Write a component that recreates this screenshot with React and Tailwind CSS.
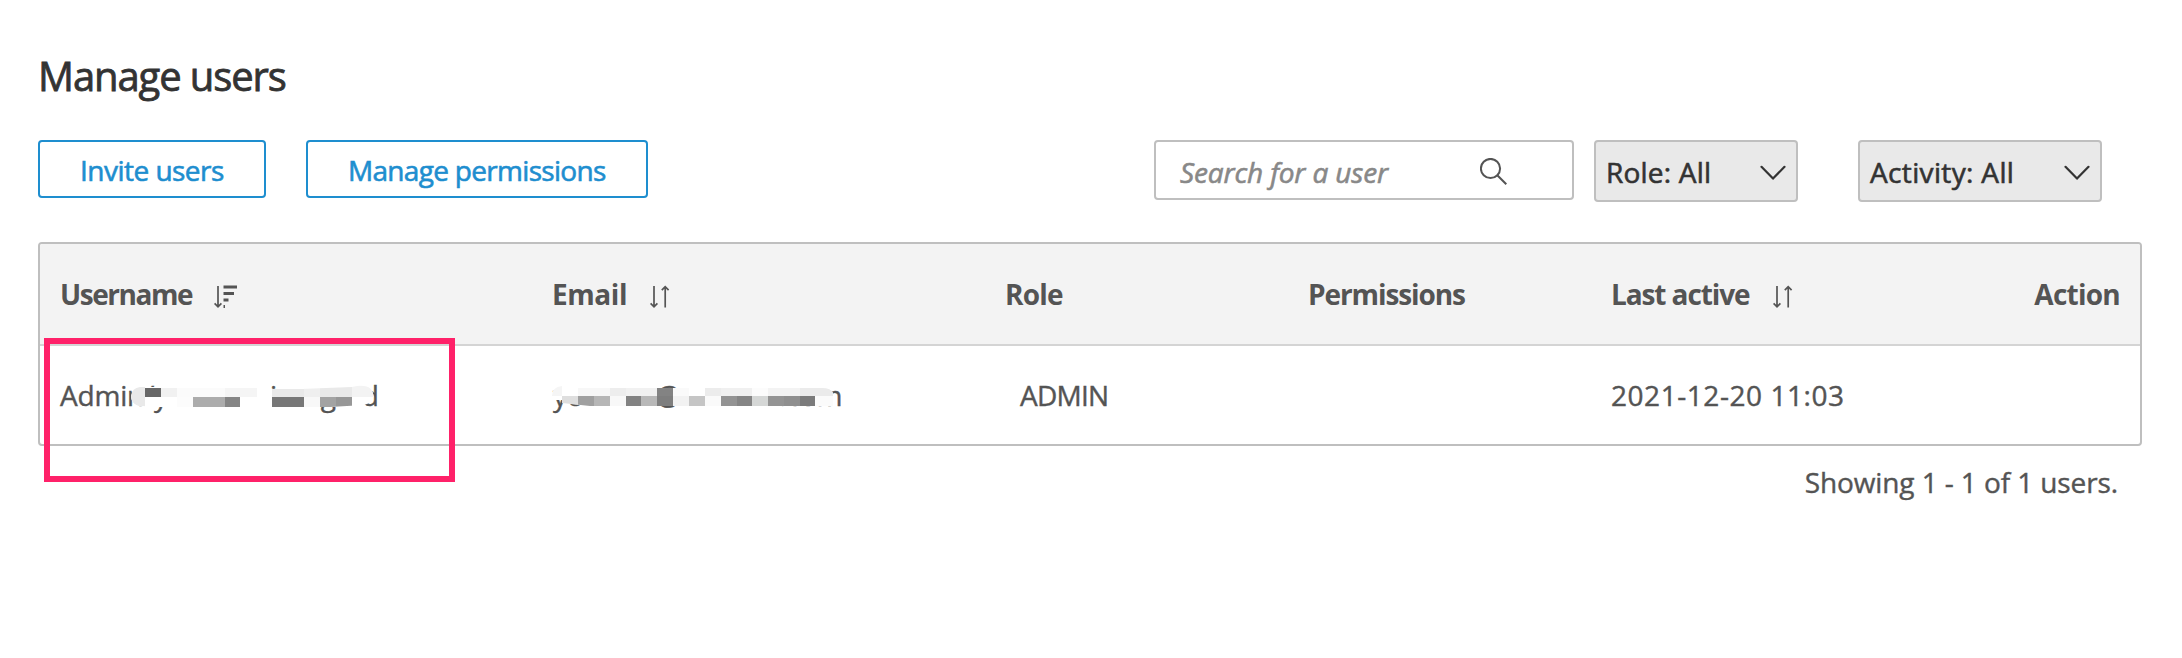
import React from 'react';

const usernameMask = [
  [131, 386, 14, 20, '#e9e9e9'],
  [145, 388, 16, 9, '#676767'], [161, 388, 16, 9, '#f1f1f1'], [177, 388, 48, 9, '#fbfbfb'],
  [225, 388, 32, 9, '#f5f5f5'], [272, 389, 32, 8, '#e9e9e9'], [304, 388, 16, 9, '#efefef'],
  [320, 386, 32, 11, '#e9e9e9'], [352, 385, 23, 12, '#f3f3f3'], [177, 397, 16, 10, '#fcfcfc'],
  [193, 397, 32, 10, '#acacac'], [225, 397, 15, 10, '#858585'], [272, 397, 32, 10, '#777777'],
  [304, 397, 16, 10, '#f8f8f8'], [320, 397, 16, 10, '#a3a3a3'], [336, 397, 16, 10, '#979797'],
];

const emailMask = [
  [552, 386, 10, 10, '#f5f5f5'], [578, 388, 32, 8, '#f7f7f7'], [610, 388, 16, 8, '#ededed'],
  [626, 388, 31, 8, '#f1f1f1'], [657, 388, 16, 8, '#838383'], [673, 388, 16, 8, '#fafafa'],
  [705, 388, 16, 8, '#ececec'], [721, 388, 31, 8, '#f0f0f0'], [752, 388, 16, 8, '#fcfcfc'],
  [768, 388, 32, 8, '#f3f3f3'], [800, 388, 33, 8, '#ebebeb'], [562, 396, 16, 10, '#dedede'],
  [578, 396, 16, 10, '#a0a0a0'], [594, 396, 16, 10, '#b6b6b6'], [610, 396, 16, 10, '#f8f8f8'],
  [626, 396, 15, 10, '#828282'], [641, 396, 16, 10, '#b8b8b8'], [657, 396, 16, 10, '#7e7e7e'],
  [673, 396, 16, 10, '#f2f2f2'], [689, 396, 16, 10, '#c5c5c5'], [705, 396, 16, 10, '#fafafa'],
  [721, 396, 16, 10, '#939393'], [737, 396, 15, 10, '#858585'], [752, 396, 16, 10, '#d5d7d6'],
  [768, 396, 16, 10, '#949494'], [784, 396, 16, 10, '#8f8f8f'], [800, 396, 15, 10, '#7b7b7b'],
  [815, 396, 18, 10, '#fbfbfb'],
];

function Mosaic({ cells, id, outline, x, width, className }) {
  return (
    <svg className={className} width={width} height="24" viewBox={`${x} 384 ${width} 24`}>
      <clipPath id={id}><path d={outline} /></clipPath>
      <g clipPath={`url(#${id})`}>
        <rect x={x} y="384" width={width} height="24" fill="#fff" />
        {cells.map(([cx, cy, w, h, fill]) => (
          <rect key={`${cx}-${cy}`} x={cx} y={cy} width={w} height={h} fill={fill} />
        ))}
      </g>
    </svg>
  );
}

function Chevron() {
  return (
    <svg className="mt-[3px]" width="26" height="16" viewBox="0 0 26 16" fill="none" stroke="#333" strokeWidth="2.2" strokeLinecap="round" strokeLinejoin="round">
      <path d="M1.5 1.8 13 13.6 24.5 1.8" />
    </svg>
  );
}

function SortBoth() {
  return (
    <svg className="mt-[6px]" width="20" height="24" viewBox="0 0 20 24" fill="none" stroke="#545454" strokeWidth="1.7">
      <path d="M4 1v20.5M.6 18.4 4 21.8l3.4-3.4M15.2 22.5V2M11.8 5.1l3.4-3.4 3.4 3.4" />
    </svg>
  );
}

function SortDesc() {
  return (
    <svg className="mt-[6px]" width="24" height="24" viewBox="0 0 24 24" fill="#545454">
      <path d="M4 1v20.5M.6 18.4 4 21.8l3.4-3.4" fill="none" stroke="#545454" strokeWidth="1.7" />
      <path d="M9.500 .5h13.500v3H9.500zM9.500 7h10.500v3H9.500zM9.500 13.500h5v3h-5zM9.500 20h1.500v3H9.500z" />
    </svg>
  );
}

export default function App() {
  return (
    <main className="relative h-[658px] w-[2182px] overflow-hidden bg-white pl-[38px] pt-[52px] font-['Open_Sans',sans-serif] text-[28px] leading-[40px] text-[#545454]">
      <h1 className="h-[88px] text-[40px] leading-[48px] tracking-[-1.1px] text-[#333] [-webkit-text-stroke:0.8px_#333]">Manage users</h1>

      <div className="flex h-[62px] items-start whitespace-nowrap">
        <button className="flex h-[58px] w-[228px] items-center rounded-[4px] border-2 border-[#1e8ecf] pl-[40px] pt-px tracking-[-0.52px] text-[#1e8ecf] [-webkit-text-stroke:0.6px_#1e8ecf]">Invite users</button>
        <button className="ml-[40px] flex h-[58px] w-[342px] items-center rounded-[4px] border-2 border-[#1e8ecf] pl-[40px] pt-px tracking-[-0.69px] text-[#1e8ecf] [-webkit-text-stroke:0.6px_#1e8ecf]">Manage permissions</button>
        <div className="ml-[506px] flex h-[60px] w-[420px] items-center rounded-[4px] border-2 border-[#bfbfbf] pl-[24px]">
          <span className="w-[300px] pt-[3px] italic tracking-[-0.13px] text-[#888] [-webkit-text-stroke:0.6px_#888]">Search for a user</span>
          <svg className="mt-[3px]" width="28" height="28" viewBox="0 0 28 28" fill="none" stroke="#545454" strokeWidth="2">
            <circle cx="10.5" cy="10.5" r="9.6" />
            <path d="m17.3 17.3 9 9" />
          </svg>
        </div>
        <div className="ml-[20px] flex h-[62px] w-[204px] items-center justify-between rounded-[4px] border-2 border-[#bfbfbf] bg-[#e9e9e9] px-[10px] pt-px tracking-[0.2px] text-[#333] [-webkit-text-stroke:0.6px_#333]">
          Role: All<Chevron />
        </div>
        <div className="ml-[60px] flex h-[62px] w-[244px] items-center justify-between rounded-[4px] border-2 border-[#bfbfbf] bg-[#e9e9e9] px-[10px] pt-px tracking-[0.35px] text-[#333] [-webkit-text-stroke:0.6px_#333]">
          Activity: All<Chevron />
        </div>
      </div>

      <section className="mt-[40px] h-[204px] w-[2104px] overflow-hidden whitespace-nowrap rounded-[4px] border-2 border-[#bfbfbf]">
        <div className="grid h-[102px] grid-cols-[492px_453px_303px_303px_1fr] items-center border-b-2 border-[#d4d4d4] bg-[#f3f3f3] pl-[20px] pr-[20px] font-bold">
          <div className="flex items-center gap-[22px]"><span className="tracking-[-1.45px]">Username</span><SortDesc /></div>
          <div className="flex items-center gap-[23px]"><span className="tracking-[-0.41px]">Email</span><SortBoth /></div>
          <span className="tracking-[-0.79px]">Role</span>
          <span className="tracking-[-1.1px]">Permissions</span>
          <div className="flex items-center justify-between">
            <div className="flex items-center gap-[24px]"><span className="tracking-[-1.1px]">Last active</span><SortBoth /></div>
            <span className="tracking-[-0.75px]">Action</span>
          </div>
        </div>
        <div className="grid h-[98px] grid-cols-[492px_453px_303px_303px_1fr] items-center pl-[20px] [-webkit-text-stroke:0.4px_#545454]">
          <div className="relative flex h-[40px] tracking-[-0.2px]">
            <span>Admin/y</span>
            <span className="ml-[102px]">i</span>
            <span className="ml-[44px]">g</span>
            <span className="ml-[26px]">d</span>
            <Mosaic
              id="mask-username" cells={usernameMask} x={130} width={246} className="absolute left-[70px] top-[9px]"
              outline="M140 387H262V392H270V389L300 389L352 387Q373 382 373.500 397Q372 403 364 405L330 407H145Q131 406 131 396Q132 388 140 387Z"
            />
          </div>
          <div className="relative flex h-[40px]">
            <span className="pl-px">yo</span>
            <span className="ml-[72px]">@</span>
            <span className="ml-[98px]">.com</span>
            <Mosaic
              id="mask-email" cells={emailMask} x={550} width={284} className="absolute left-[-2px] top-[9px]"
              outline="M562 386Q552 387 552 396V400H562V403L590 406H833V393Q831 388 822 388H600Z"
            />
          </div>
          <span className="pl-[15px] tracking-[-0.76px]">ADMIN</span>
          <span />
          <span className="tracking-[0.55px]">2021-12-20 11:03</span>
        </div>
      </section>

      <p className="w-[2080px] pt-[16px] text-right tracking-[-0.1px] [-webkit-text-stroke:0.4px_#545454]">Showing 1 - 1 of 1 users.</p>

      <div className="absolute left-[44px] top-[338px] h-[144px] w-[411px] border-6 border-[#ff2169]" />
    </main>
  );
}
